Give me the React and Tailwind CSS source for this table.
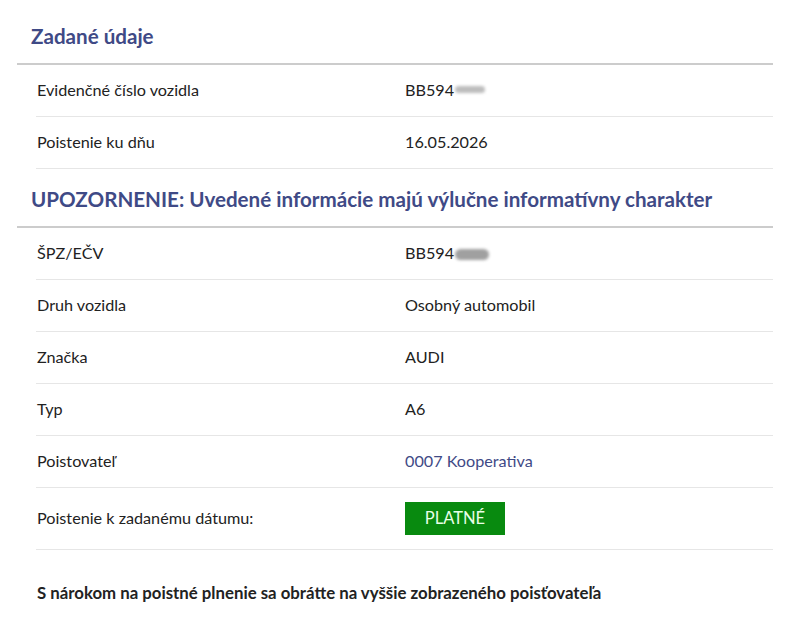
const Blur = ({ dense }) => (
  <span
    className={
      dense
        ? "inline-block w-[34px] h-[11px] ml-[1px] rounded-full bg-[#a0a0a0] blur-[1.5px] align-[-1px]"
        : "inline-block w-[30px] h-[7px] ml-[1px] rounded-full bg-[#bdbdbd] blur-[1.5px] align-[3px]"
    }
  />
);

const Row = ({ label, children, tall }) => (
  <div
    className={
      "flex items-center border-b border-[#e6e6e6] " + (tall ? "h-[62px]" : "h-[52px]")
    }
  >
    <div className="w-[369px] pl-[1px]">{label}</div>
    <div>{children}</div>
  </div>
);

const Heading = ({ children, top }) => (
  <div className={"border-b-2 border-[#cccccc] " + top}>
    <h2 className="pl-[14px] pb-[14px] text-[20.6px] font-bold text-[#3f4a86] leading-[26px]">
      {children}
    </h2>
  </div>
);

export default function App() {
  return (
    <div className="bg-white min-h-[629px] text-[16.2px] text-[#222] font-['Lato','Noto_Sans',sans-serif]">
      <div className="ml-[17px] w-[756px]">
        <Heading top="pt-[23px]">Zadané údaje</Heading>
        <div className="ml-[19px]">
          <Row label="Evidenčné číslo vozidla">
            BB594<Blur />
          </Row>
          <Row label="Poistenie ku dňu">16.05.2026</Row>
        </div>

        <Heading top="pt-[17px]">
          UPOZORNENIE: Uvedené informácie majú výlučne informatívny charakter
        </Heading>
        <div className="ml-[19px]">
          <Row label="ŠPZ/EČV">
            BB594<Blur dense />
          </Row>
          <Row label="Druh vozidla">Osobný automobil</Row>
          <Row label="Značka">AUDI</Row>
          <Row label="Typ">A6</Row>
          <Row label="Poistovateľ">
            <a href="#" className="text-[#3f4a86]">0007 Kooperativa</a>
          </Row>
          <Row label="Poistenie k zadanému dátumu:" tall>
            <span className="flex items-center justify-center w-[100px] h-[33px] bg-[#088a0f] text-[#e8ffe8] text-[16.5px]">
              PLATNÉ
            </span>
          </Row>
          <p className="pt-[30px] pl-[1px] font-bold text-[16.8px]">
            S nárokom na poistné plnenie sa obrátte na vyššie zobrazeného poisťovateľa
          </p>
        </div>
      </div>
    </div>
  );
}
